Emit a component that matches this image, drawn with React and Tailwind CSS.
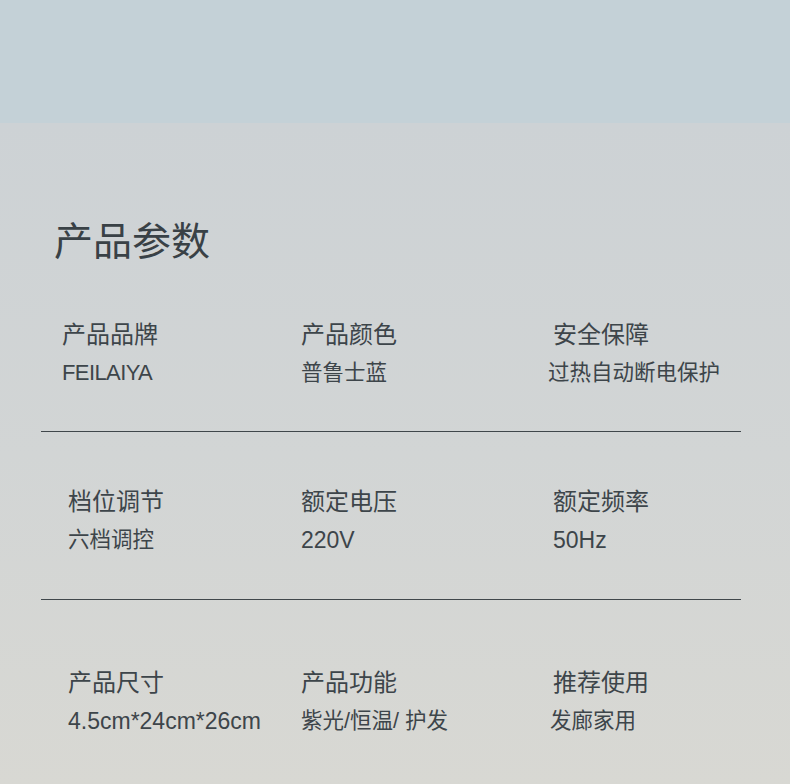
import React from 'react';

const rows = [
    {
        items: [
            { label: '产品品牌', value: 'FEILAIYA', labelCls: '', valueCls: 'text-[22px] tracking-[-0.6px]' },
            { label: '产品颜色', value: '普鲁士蓝', labelCls: '', valueCls: '' },
            { label: '安全保障', value: '过热自动断电保护', labelCls: '', valueCls: '-ml-[5px]' },
        ],
        top: 'mt-[61px]',
        line: 'mt-[47px]',
    },
    {
        items: [
            { label: '档位调节', value: '六档调控', labelCls: 'ml-[6px]', valueCls: 'ml-[6px]' },
            { label: '额定电压', value: '220V', labelCls: '', valueCls: 'text-[23px]' },
            { label: '额定频率', value: '50Hz', labelCls: '', valueCls: 'text-[23px]' },
        ],
        top: 'mt-[58px]',
        line: 'mt-[48px]',
    },
    {
        items: [
            { label: '产品尺寸', value: '4.5cm*24cm*26cm', labelCls: 'ml-[6px]', valueCls: 'ml-[6px] text-[23px]' },
            { label: '产品功能', value: '紫光/恒温/ 护发', labelCls: '', valueCls: '' },
            { label: '推荐使用', value: '发廊家用', labelCls: '', valueCls: '-ml-[3px]' },
        ],
        top: 'mt-[71px]',
    },
];

const Param = ({ item }) => (
    <div className="flex flex-col">
        <div className={`text-[24px] leading-[24px] whitespace-nowrap ${item.labelCls}`}>{item.label}</div>
        <div className={`mt-[15px] text-[21.5px] leading-[22px] whitespace-nowrap ${item.valueCls}`}>{item.value}</div>
    </div>
);

const App = () => {
    return (
        <div
            className="w-[790px] h-[784px] overflow-hidden text-[#3d454a]"
            style={{ fontFamily: '"Liberation Sans", "Noto Sans CJK SC", sans-serif' }}
        >
            <div className="h-[123px] bg-[#c4d1d7]" />
            <div className="h-[661px] bg-gradient-to-b from-[#cdd2d5] via-[#d2d5d5] to-[#d8d8d3] px-[41px] pt-[99px]">
                <h1 className="ml-[13px] text-[39px] leading-[40px] text-[#394146]">产品参数</h1>
                {rows.map((row, i) => (
                    <div key={i}>
                        <div className={`${row.top} pl-[21px] grid grid-cols-[239px_252px_1fr]`}>
                            {row.items.map((item) => (
                                <Param key={item.label} item={item} />
                            ))}
                        </div>
                        {row.line && <div className={`${row.line} h-px w-[700px] bg-[#40474b]`} />}
                    </div>
                ))}
            </div>
        </div>
    );
};

export default App;
